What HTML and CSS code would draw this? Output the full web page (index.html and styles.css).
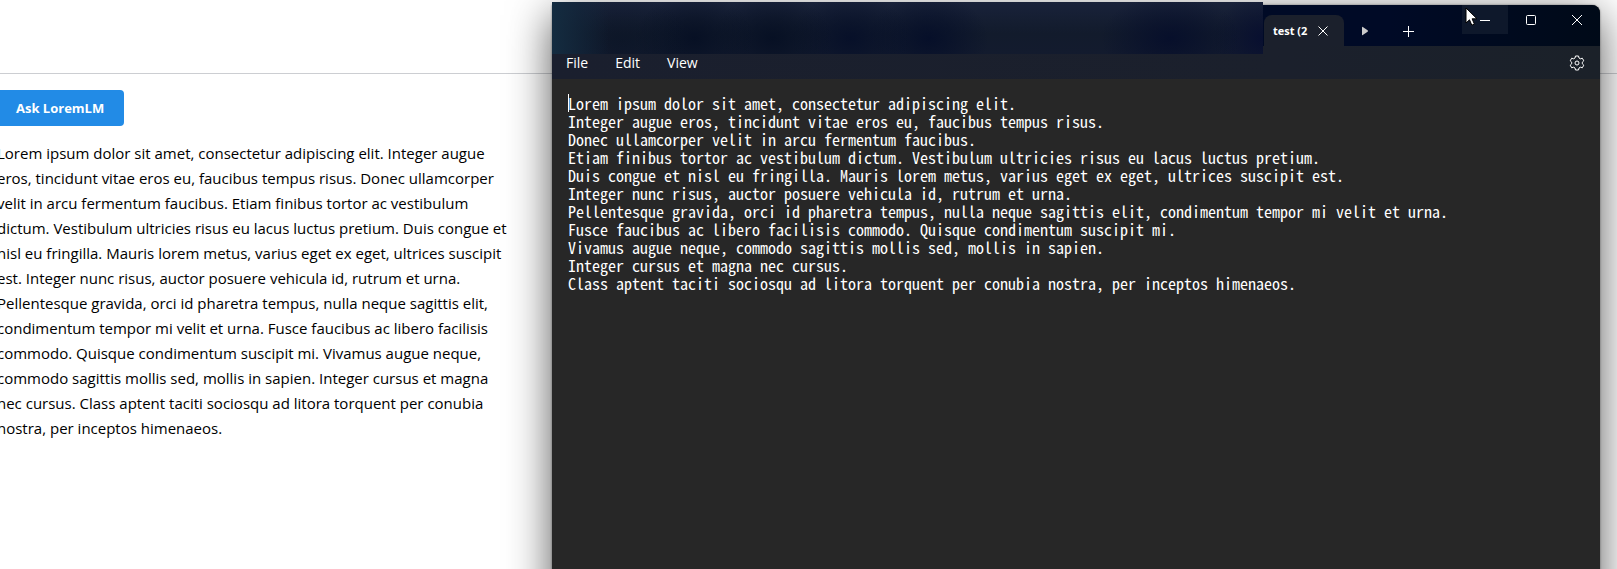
FILE: index.html
```html
<!DOCTYPE html>
<html lang="en">
<head>
<meta charset="utf-8">
<title>Ask LoremLM</title>
<link rel="stylesheet" href="styles.css">
</head>
<body>
<div class="desktop">
<header class="page-header"></header>
<main class="page-main">
  <button class="ask-button" type="button">Ask LoremLM</button>
  <p class="answer">Lorem ipsum dolor sit amet, consectetur adipiscing elit. Integer augue<br>eros, tincidunt vitae eros eu, faucibus tempus risus. Donec ullamcorper<br>velit in arcu fermentum faucibus. Etiam finibus tortor ac vestibulum<br>dictum. Vestibulum ultricies risus eu lacus luctus pretium. Duis congue et<br>nisl eu fringilla. Mauris lorem metus, varius eget ex eget, ultrices suscipit<br>est. Integer nunc risus, auctor posuere vehicula id, rutrum et urna.<br>Pellentesque gravida, orci id pharetra tempus, nulla neque sagittis elit,<br>condimentum tempor mi velit et urna. Fusce faucibus ac libero facilisis<br>commodo. Quisque condimentum suscipit mi. Vivamus augue neque,<br>commodo sagittis mollis sed, mollis in sapien. Integer cursus et magna<br>nec cursus. Class aptent taciti sociosqu ad litora torquent per conubia<br>nostra, per inceptos himenaeos.</p>
</main>

<section class="window" aria-label="Text editor">
  <div class="titlebar">
    <div class="blurred-tabs"></div>
    <div class="tab">
      <span class="tab-title">test (2</span>
      <button class="icon-button" type="button" aria-label="Close tab"><svg width="12" height="12" viewBox="0 0 12 12"><path d="M1.5 1.5l9 9M10.500 1.500l-9 9"/></svg></button>
    </div>
    <button class="icon-button tab-scroll" type="button" aria-label="Scroll tabs"><svg width="8" height="10" viewBox="0 0 8 10"><path class="solid" d="M1 1.200Q1 .5 1.800 1L6.600 4.200Q7.400 5 6.600 5.800L1.800 9Q1 9.500 1 8.800Z"/></svg></button>
    <button class="icon-button tab-new" type="button" aria-label="New tab"><svg width="12" height="12" viewBox="0 0 12 12"><path d="M6.500 1v11M1 6.500h11"/></svg></button>
    <div class="caption-buttons">
      <button class="caption hovered" type="button" aria-label="Minimize"><svg width="12" height="12" viewBox="0 0 12 12"><path d="M1 6.500h10"/></svg></button>
      <button class="caption" type="button" aria-label="Maximize"><svg width="12" height="12" viewBox="0 0 12 12"><rect x="1.500" y="1.500" width="9" height="9" rx="1"/></svg></button>
      <button class="caption" type="button" aria-label="Close"><svg width="12" height="12" viewBox="0 0 12 12"><path d="M1 1l10 10M11 1L1 11"/></svg></button>
    </div>
  </div>
  <nav class="menubar">
    <button class="menu" type="button">File</button>
    <button class="menu" type="button">Edit</button>
    <button class="menu" type="button">View</button>
    <button class="icon-button settings" type="button" aria-label="Settings"><svg width="16" height="16" viewBox="0 0 16 16"><path d="M6.500 1h3l.5 2 1.300.8 2-.6 1.500 2.600-1.500 1.400v1.600l1.500 1.400-1.500 2.600-2-.6-1.300.8-.5 2h-3L6 13l-1.300-.8-2 .6-1.500-2.600 1.500-1.400V7.200L1.200 5.800l1.500-2.600 2 .6L6 3z"/><circle cx="8" cy="8" r="2"/></svg></button>
  </nav>
  <div class="editor"><span class="caret"></span>Lorem ipsum dolor sit amet, consectetur adipiscing elit.
Integer augue eros, tincidunt vitae eros eu, faucibus tempus risus.
Donec ullamcorper velit in arcu fermentum faucibus.
Etiam finibus tortor ac vestibulum dictum. Vestibulum ultricies risus eu lacus luctus pretium.
Duis congue et nisl eu fringilla. Mauris lorem metus, varius eget ex eget, ultrices suscipit est.
Integer nunc risus, auctor posuere vehicula id, rutrum et urna.
Pellentesque gravida, orci id pharetra tempus, nulla neque sagittis elit, condimentum tempor mi velit et urna.
Fusce faucibus ac libero facilisis commodo. Quisque condimentum suscipit mi.
Vivamus augue neque, commodo sagittis mollis sed, mollis in sapien.
Integer cursus et magna nec cursus.
Class aptent taciti sociosqu ad litora torquent per conubia nostra, per inceptos himenaeos.</div>
</section>
<svg class="pointer" width="13" height="20" viewBox="0 0 13 20"><path d="M1 1v15l3.500-3.200 2.300 5.400 2.600-1.100-2.300-5.300H12z"/></svg>
</div>
</body>
</html>
```
FILE: styles.css
```css
* {
  box-sizing: border-box;
}

body {
  margin: 0;
  background: #fff;
  color: #000;
  font-family: "Segoe UI", "Open Sans", sans-serif;
}

.desktop {
  position: relative;
  height: 100vh;
  overflow: hidden;
}

button {
  border: 0;
  padding: 0;
  background: none;
  color: inherit;
  font-family: inherit;
}

.page-header {
  height: 74px;
  border-bottom: 1px solid #ccced2;
}

.page-main {
  margin-left: -3px;
  padding-top: 16px;
}

.ask-button {
  display: block;
  height: 36px;
  padding: 0 20px 0 19px;
  border-radius: 4px;
  background: #228be6;
  color: #fff;
  font-size: 13px;
  font-weight: 700;
}

.answer {
  margin: 15px 0 0;
  font-size: 15px;
  line-height: 25px;
  white-space: nowrap;
}

.window {
  position: absolute;
  top: 5px;
  right: 17px;
  bottom: -40px;
  left: 552px;
  display: flex;
  flex-direction: column;
  border-radius: 0 8px 0 0;
  background: #272727;
  box-shadow: 0 0 2px rgba(0, 0, 0, 0.5), 0 10px 44px rgba(0, 0, 0, 0.66);
  color: #fff;
}

.titlebar {
  display: flex;
  height: 41px;
  border-radius: 0 8px 0 0;
  background: linear-gradient(90deg, #000a26 80%, #000a18);
}

.blurred-tabs {
  position: relative;
  flex: 1;
  margin-top: -3px;
  margin-bottom: -8px;
  background:
    linear-gradient(90deg, #142c40, rgba(18, 38, 58, 0.7) 4%, transparent 8%),
    radial-gradient(ellipse 70px 44px at 10% 75%, #08122488, transparent),
    radial-gradient(ellipse 60px 44px at 20% 70%, #071024, transparent),
    radial-gradient(ellipse 60px 44px at 31% 70%, #071024, transparent),
    radial-gradient(ellipse 60px 44px at 42% 70%, #071029, transparent),
    radial-gradient(ellipse 60px 44px at 53% 70%, #060f29, transparent),
    radial-gradient(ellipse 70px 44px at 87% 70%, #070f2b, transparent),
    radial-gradient(ellipse 50px 44px at 100% 70%, #080f30, transparent),
    linear-gradient(#19223a, #121b2c 60%, #131b2e);
}

.tab {
  display: flex;
  align-items: center;
  width: 80px;
  margin-top: 10px;
  margin-left: 1px;
  padding: 0 15px 0 9px;
  border-radius: 8px 8px 0 0;
  background: #1b202c;
}

.tab-title {
  font-size: 11px;
  font-weight: 700;
  white-space: nowrap;
}

.icon-button,
.caption {
  display: flex;
  align-items: center;
  justify-content: center;
}

.tab .icon-button {
  margin-left: auto;
}

svg {
  fill: none;
  stroke: #fff;
  stroke-width: 1;
}

.solid {
  fill: #ccc;
  stroke: none;
}

.tab-scroll {
  width: 42px;
  padding-top: 10px;
}

.tab-new {
  width: 44px;
  padding-top: 10px;
}

.caption-buttons {
  display: flex;
  margin-left: 32px;
}

.caption {
  width: 46px;
  height: 29px;
}

.hovered {
  background: #0e182b;
}

.menubar {
  display: flex;
  align-items: center;
  gap: 27px;
  height: 33px;
  padding: 0 15px 0 14px;
  background: linear-gradient(90deg, #1a1f2e, #1b202c 70%, #1b2129);
}

.menu {
  font-size: 14px;
}

.settings {
  margin-left: auto;
}

.editor {
  padding: 15px 16px;
  font-family: Consolas, "Noto Sans Mono CJK SC", "Liberation Mono", monospace;
  font-size: 16px;
  line-height: 18px;
  white-space: pre;
}

.caret {
  position: absolute;
  width: 1px;
  height: 18px;
  background: #fff;
}

.pointer {
  position: absolute;
  top: 7px;
  right: 139px;
}

.pointer path {
  fill: #fff;
  stroke: #000;
}
```
